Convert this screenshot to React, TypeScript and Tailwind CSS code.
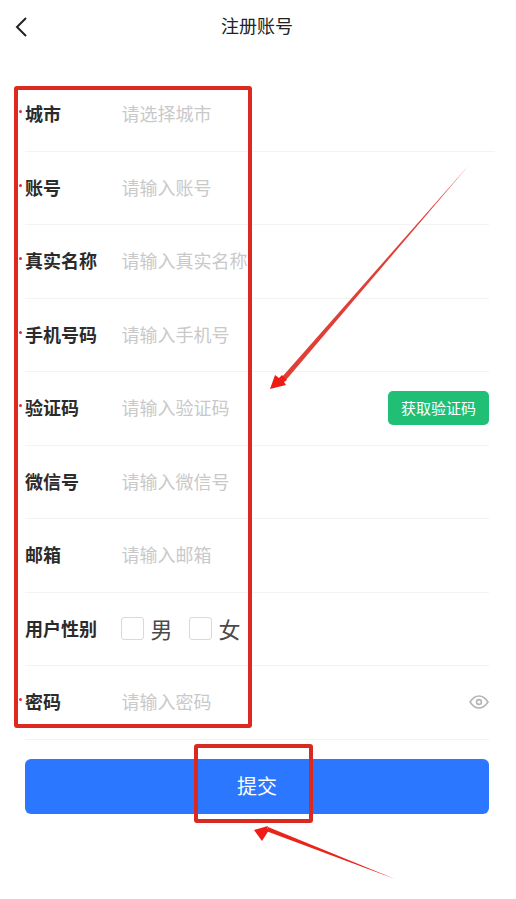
import React from "react";

const cjk = "font-['Noto_Sans_CJK_SC','Noto_Sans',sans-serif]";

interface Field {
  label: string;
  placeholder: string;
  required?: boolean;
}

const topFields: Field[] = [
  { label: "城市", placeholder: "请选择城市", required: true },
  { label: "账号", placeholder: "请输入账号", required: true },
  { label: "真实名称", placeholder: "请输入真实名称", required: true },
  { label: "手机号码", placeholder: "请输入手机号", required: true },
];

function Row({ label, required, wide, children }: { label: string; required?: boolean; wide?: boolean; children: React.ReactNode }) {
  return (
    <div className={`relative flex h-[73.5px] items-center border-b border-[#f3f3f3] pb-[1px] ${wide ? "mr-[-6px]" : ""}`}>
      {required && <span className="absolute left-[-6px] top-[32px] size-[3px] rounded-full bg-[#e8283c]" />}
      <span className="w-[96.5px] shrink-0 text-[18px] font-bold leading-normal text-[#2b2b2b]">{label}</span>
      {children}
    </div>
  );
}

function Placeholder({ text }: { text: string }) {
  return <span className="whitespace-nowrap text-[18px] leading-normal text-[#c9c9c9]">{text}</span>;
}

function Gender({ text }: { text: string }) {
  return (
    <span className="flex items-center gap-[7px]">
      <span className="size-[23px] rounded-[3px] border border-[#d9d9d9] bg-white" />
      <span className="text-[22px] leading-normal text-[#4a4a4a]">{text}</span>
    </span>
  );
}

export default function App() {
  return (
    <div className={`relative h-[899px] w-[516px] overflow-hidden bg-white ${cjk}`}>
      {/* header */}
      <div className="relative flex h-[52px] items-center justify-center pb-[2px] pr-[2px]">
        <button type="button" className="absolute left-[14px] top-[16px]">
          <svg width="14" height="22" viewBox="0 0 14 22" fill="none" stroke="#222" strokeWidth="2">
            <path d="M12 2 L3 11 L12 20" />
          </svg>
        </button>
        <span className="text-[18px] leading-normal text-[#222]">注册账号</span>
      </div>

      {/* form */}
      <div className="px-[25px] pr-[27px] pt-[26px]">
        {topFields.map((f, i) => (
          <Row key={f.label} label={f.label} required={f.required} wide={i === 0}>
            <Placeholder text={f.placeholder} />
          </Row>
        ))}
        <Row label="验证码" required>
          <Placeholder text="请输入验证码" />
          <span className="ml-auto mt-[1px] flex h-[34px] w-[101px] items-center justify-center rounded-[5px] bg-[#1fbf75] text-[15px] leading-normal text-white">
            获取验证码
          </span>
        </Row>
        <Row label="微信号">
          <Placeholder text="请输入微信号" />
        </Row>
        <Row label="邮箱">
          <Placeholder text="请输入邮箱" />
        </Row>
        <Row label="用户性别">
          <span className="ml-[-1px] flex gap-[16px]">
            <Gender text="男" />
            <Gender text="女" />
          </span>
        </Row>
        <Row label="密码" required>
          <Placeholder text="请输入密码" />
          <svg className="ml-auto" width="20" height="14" viewBox="0 0 20 14" fill="none" stroke="#b5b5b5" strokeWidth="1.6">
            <path d="M1 7 C4 2.4 7 1 10 1 C13 1 16 2.4 19 7 C16 11.6 13 13 10 13 C7 13 4 11.6 1 7 Z" />
            <circle cx="10" cy="7" r="2.4" />
          </svg>
        </Row>

        <button
          type="button"
          className="mt-[19px] flex h-[55px] w-full items-center justify-center rounded-[6px] bg-[#2b77ff] text-[20px] leading-normal text-white"
        >
          提交
        </button>
      </div>

      {/* red annotations on top of the screenshot */}
      <div className="absolute left-[14px] top-[86px] h-[642px] w-[238px] rounded-[3px] border-[4px] border-[#dc2a20]" />
      <div className="absolute left-[194px] top-[744px] h-[79px] w-[119px] rounded-[3px] border-[4px] border-[#d92a22]" />
      <svg className="absolute left-0 top-0" width="516" height="899" viewBox="0 0 516 899">
        <path d="M469 165 L282 377 L286 380 Z" fill="#dc2a20" opacity="0.9" />
        <path d="M270 389 L275 375 L279 378 L282 375 L287 380 L284 382 L286 385 Z" fill="#ee1c14" />
        <path d="M395 879 L268 827 L266 831 Z" fill="#e8251b" />
        <path d="M254 830 L268 826 L267 829 L269 830 L262 841 Z" fill="#ee1c14" />
      </svg>
    </div>
  );
}
